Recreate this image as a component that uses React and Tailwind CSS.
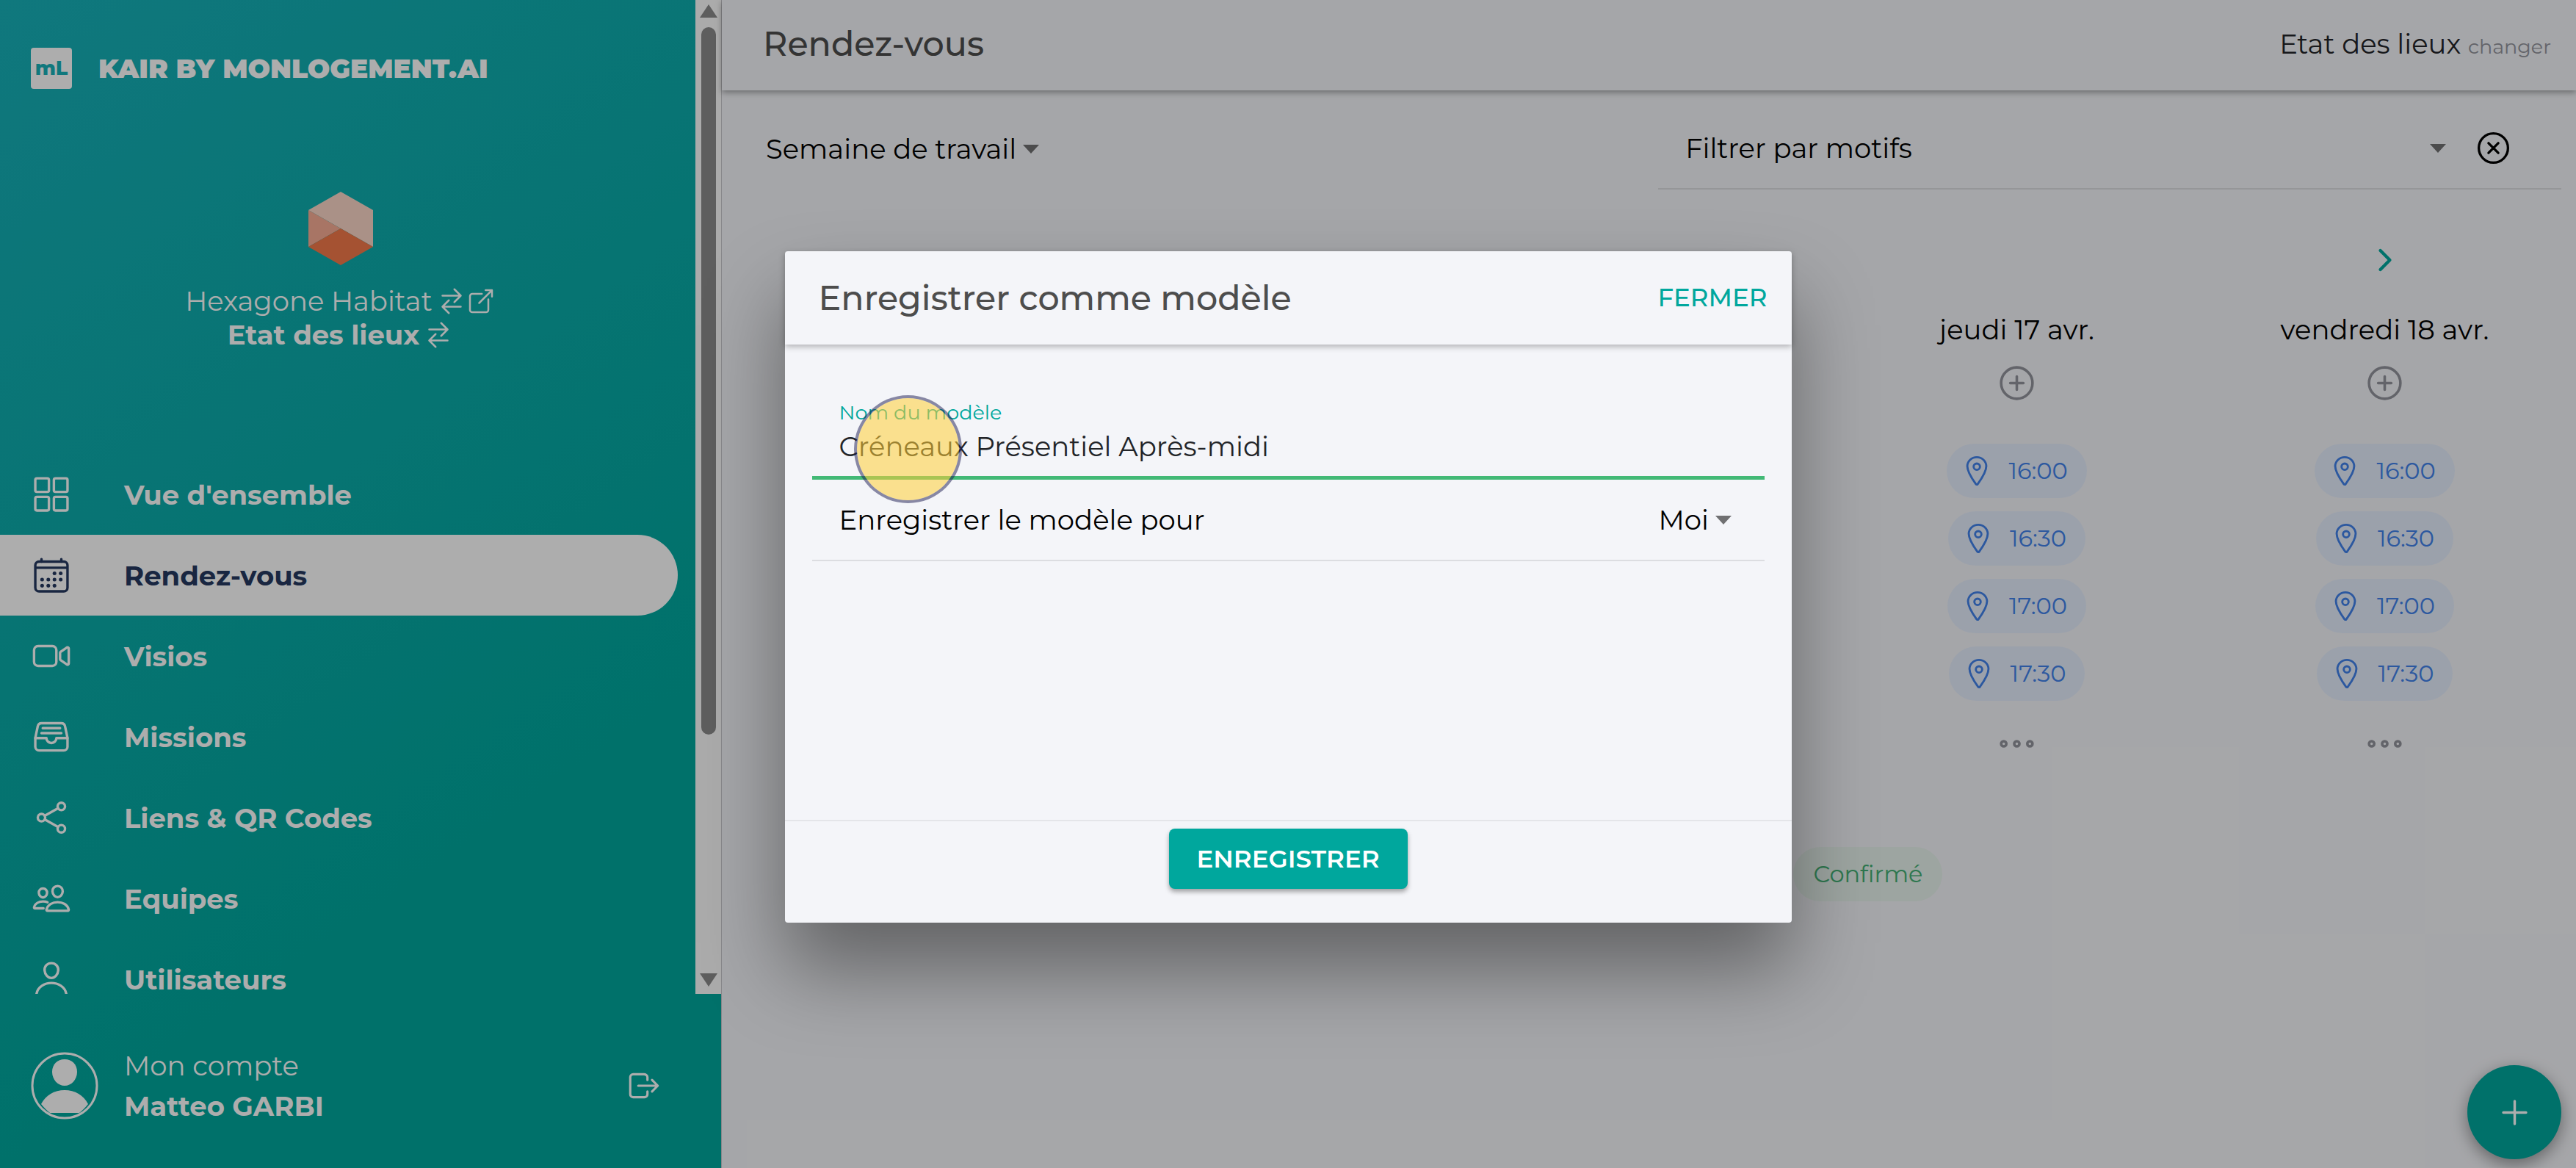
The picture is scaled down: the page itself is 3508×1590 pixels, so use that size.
import React, { useState } from "react";
import {
  IoAddCircleOutline,
  IoAddOutline,
  IoCalendarOutline,
  IoChevronForward,
  IoCloseCircleOutline,
  IoEllipsisHorizontalOutline,
  IoFileTrayFullOutline,
  IoGridOutline,
  IoLocationOutline,
  IoLogOutOutline,
  IoOpenOutline,
  IoPeopleOutline,
  IoPersonOutline,
  IoShareSocialOutline,
  IoSwapHorizontalOutline,
  IoVideocamOutline,
} from "react-icons/io5";

const menu = [
  { label: "Vue d'ensemble", icon: IoGridOutline },
  { label: "Rendez-vous", icon: IoCalendarOutline, active: true },
  { label: "Visios", icon: IoVideocamOutline },
  { label: "Missions", icon: IoFileTrayFullOutline },
  { label: "Liens & QR Codes", icon: IoShareSocialOutline },
  { label: "Equipes", icon: IoPeopleOutline },
  { label: "Utilisateurs", icon: IoPersonOutline },
];

const slots = ["16:00", "16:30", "17:00", "17:30"];

const days = [
  { label: "jeudi 17 avr.", slots },
  { label: "vendredi 18 avr.", slots, last: true },
];

const Caret = () => (
  <svg viewBox="0 0 22 12" className="h-3 w-[22px] shrink-0 pointer-events-none" fill="#707072">
    <path d="M0 0h22L11 12z" />
  </svg>
);

const Hexagon = () => (
  <svg viewBox="0 0 88 100" className="h-[100px] w-[88px]">
    <path d="M44 0 88 25V75L44 50 0 25z" fill="#fbd6c8" />
    <path d="M0 25 44 50 0 75z" fill="#f8ad96" />
    <path d="M44 50 88 75 44 100 0 75z" fill="#f4794a" />
  </svg>
);

const Avatar = () => (
  <svg viewBox="0 0 92 92" className="h-[92px] w-[92px] shrink-0">
    <circle cx="46" cy="46" r="44" fill="none" stroke="#fff" strokeWidth="3" />
    <path d="M46 10c10 0 17 7 17 17 0 11-8 19-17 19s-17-8-17-19c0-10 7-17 17-17z" fill="#fff" />
    <path d="M14 71c6-12 18-19 32-19s26 7 32 19c-4 5-8 9-12 12H26c-4-3-8-7-12-12z" fill="#fff" />
  </svg>
);

const Sidebar = () => (
  <aside className="w-[983px] shrink-0 flex flex-col border-r border-[#c8c8cc] bg-[linear-gradient(145deg,#18b1b9_0%,#00a79d_70%)] text-white">
    <div className="flex flex-1 min-h-0">
      <div className="flex-1 min-w-0 overflow-hidden">
        {/* Brand */}
        <div className="flex items-center gap-9 pl-[42px] pt-[65px]">
          <div className="flex h-14 w-14 items-center justify-center rounded bg-white text-[27px] font-extrabold text-[#18b1b9]">
            mL
          </div>
          <div className="text-[36px] leading-[56px] font-black">KAIR BY MONLOGEMENT.AI</div>
        </div>

        {/* Organisation */}
        <div className="mt-[140px] flex flex-col items-center pr-5 text-[37px] leading-[46px]">
          <Hexagon />
          <div className="mt-[26px] flex h-[46px] items-center">
            <span className="mr-1.5">Hexagone Habitat</span>
            <button type="button" aria-label="Changer d'organisation">
              <IoSwapHorizontalOutline size={40} />
            </button>
            <button type="button" aria-label="Ouvrir">
              <IoOpenOutline size={40} />
            </button>
          </div>
          <div className="flex h-[46px] items-center font-bold">
            <span className="mr-1.5">Etat des lieux</span>
            <button type="button" aria-label="Changer de service">
              <IoSwapHorizontalOutline size={40} />
            </button>
          </div>
        </div>

        {/* Menu */}
        <nav className="mt-[139px]">
          {menu.map(({ label, icon: Icon, active }) => (
            <a
              key={label}
              href="#"
              className={`mr-6 flex h-[110px] items-center gap-[72px] rounded-r-full pl-[43px] text-[37px] leading-none font-bold ${
                active ? "bg-white text-[#253960]" : ""
              }`}
            >
              <Icon size={54} className="shrink-0" />
              {label}
            </a>
          ))}
        </nav>
      </div>

      {/* Scrollbar */}
      <div className="flex w-[35px] flex-col items-center bg-[#fcfcfc] pt-1.5 pb-[10px]">
        <svg viewBox="0 0 24 18" className="h-[18px] w-6" fill="#8b8b8b">
          <path d="M12 0 24 18H0z" />
        </svg>
        <div className="mt-[13px] h-[963px] w-5 rounded-full bg-[#8b8b8b]" />
        <svg viewBox="0 0 24 18" className="mt-auto h-[18px] w-6" fill="#8b8b8b">
          <path d="M0 0h24L12 18z" />
        </svg>
      </div>
    </div>

    {/* Account */}
    <div className="flex h-[237px] items-center pt-[12px] pl-[42px] pr-[80px] text-[37px] leading-[55px]">
      <Avatar />
      <div className="ml-[35px]">
        <div>Mon compte</div>
        <div className="font-bold">Matteo GARBI</div>
      </div>
      <button type="button" aria-label="Se déconnecter" className="ml-auto">
        <IoLogOutOutline size={50} />
      </button>
    </div>
  </aside>
);

const Day = ({ label, slots, last }) => (
  <div className="flex flex-col items-center">
    <div className="h-[46px]">
      {last && (
        <button type="button" aria-label="Semaine suivante" className="text-[#00a79d]">
          <IoChevronForward size={46} />
        </button>
      )}
    </div>
    <h2 className="mt-12 text-[37px] leading-[48px] text-black">{label}</h2>
    <button type="button" aria-label="Ajouter un créneau" className="mt-5 text-[#92949c]">
      <IoAddCircleOutline size={57} />
    </button>
    <div className="mt-[54px] flex flex-col items-center gap-[18px]">
      {slots.map((slot) => (
        <button
          key={slot}
          type="button"
          className="flex h-[74px] items-center gap-5 rounded-full bg-[#e5eefd] pl-[18px] pr-[26px] text-[32px] text-[#4282eb]"
        >
          <IoLocationOutline size={46} />
          {slot}
        </button>
      ))}
    </div>
    <button type="button" aria-label="Plus de créneaux" className="mt-[30px] text-[#92949c]">
      <IoEllipsisHorizontalOutline size={57} />
    </button>
  </div>
);

const Planning = () => (
  <main className="relative flex-1 min-w-0 bg-[#f4f5f9]">
    <header className="flex h-[123px] items-center justify-between pl-14 pr-[34px] pb-1 shadow-[0_3px_8px_rgba(0,0,0,0.35)]">
      <h1 className="text-[46px] font-medium text-[#4d4d4d]">Rendez-vous</h1>
      <div className="text-[37px] text-[#222428]">
        Etat des lieux{" "}
        <a href="#" className="text-[27px] text-[#92949c]">
          changer
        </a>
      </div>
    </header>

    {/* Filters */}
    <div className="flex justify-between pt-6 pl-[60px] pr-5 text-[37px] text-black">
      <div className="flex h-[111px] items-center gap-2">
        <select aria-label="Vue" className="appearance-none bg-transparent outline-none">
          <option>Semaine de travail</option>
        </select>
        <Caret />
      </div>
      <div className="flex h-[111px] w-[50.3%] items-center border-b-2 border-[#dcdde1] pl-[37px] pr-[66px]">
        <select aria-label="Motifs" className="flex-1 appearance-none bg-transparent outline-none">
          <option>Filtrer par motifs</option>
        </select>
        <Caret />
        <button type="button" aria-label="Effacer le filtre" className="ml-[38px]">
          <IoCloseCircleOutline size={53} />
        </button>
      </div>
    </div>

    {/* Week */}
    <div className="grid grid-cols-5 px-[10px] pt-[73px]">
      <div className="col-span-3" />
      {days.map((day) => (
        <Day key={day.label} {...day} />
      ))}
    </div>

    <div className="mt-[112px] pl-[57.8%]">
      <span className="inline-flex h-[74px] items-center rounded-full bg-[#e7f4ed] px-[27px] text-[32px] text-[#45b075]">
        Confirmé
      </span>
    </div>

    <button
      type="button"
      aria-label="Nouveau rendez-vous"
      className="absolute right-5 bottom-3 flex h-32 w-32 items-center justify-center rounded-full bg-[#00a79d] text-white shadow-[0_7px_22px_rgba(0,0,0,0.4)]"
    >
      <IoAddOutline size={55} />
    </button>
  </main>
);

const TemplateModal = () => {
  const [name, setName] = useState("Créneaux Présentiel Après-midi");

  return (
    <div
      role="dialog"
      aria-modal="true"
      aria-labelledby="modal-title"
      className="relative flex min-h-[914px] w-[1371px] max-w-full flex-col rounded bg-[#f4f5f9] shadow-[0_64px_110px_rgba(0,0,0,0.4)]"
    >
      <header className="flex h-[127px] items-center justify-between pl-[46px] pr-[33px] shadow-[0_3px_8px_rgba(0,0,0,0.28)]">
        <h2 id="modal-title" className="text-[46px] font-medium text-[#4d4d4d]">
          Enregistrer comme modèle
        </h2>
        <button type="button" className="text-[34px] font-medium text-[#00a79d]">
          FERMER
        </button>
      </header>

      <div className="flex-1 px-[37px] text-[37px] text-black">
        <div className="border-b-[5px] border-[#42b976] pt-[77px] pb-4 pl-[37px]">
          <label htmlFor="name" className="block text-[27px] leading-8 text-[#00a79d]">
            Nom du modèle
          </label>
          <input
            id="name"
            type="text"
            value={name}
            onChange={(e) => setName(e.target.value)}
            className="mt-1.5 block h-12 w-full bg-transparent text-[#222428] outline-none"
          />
        </div>
        <div className="flex h-[111px] items-center border-b-2 border-[#dcdde1] pl-[37px] pr-[45px]">
          <label htmlFor="owner">Enregistrer le modèle pour</label>
          <select id="owner" className="ml-auto mr-2 appearance-none bg-transparent outline-none">
            <option>Moi</option>
          </select>
          <Caret />
        </div>
      </div>

      <footer className="flex h-[140px] items-start justify-center border-t-2 border-[#e4e5e9] pt-[10px]">
        <button
          type="button"
          className="h-[82px] w-[325px] rounded-lg bg-[#00a79d] text-[34px] font-semibold text-white shadow-[0_4px_6px_rgba(0,0,0,0.35)]"
        >
          ENREGISTRER
        </button>
      </footer>

      {/* Click marker */}
      <div className="absolute left-[94px] top-[196px] h-[147px] w-[147px] rounded-full border-4 border-[#1a1950]/50 bg-[#ffce37]/55 bg-clip-padding pointer-events-none" />
    </div>
  );
};

const App = () => {
  return (
    <div className="relative flex h-screen overflow-hidden font-['Montserrat','Inter',sans-serif]">
      <Sidebar />
      <Planning />
      <div className="absolute inset-0 flex items-center justify-center bg-black/32 pt-2">
        <TemplateModal />
      </div>
    </div>
  );
};

export default App;
